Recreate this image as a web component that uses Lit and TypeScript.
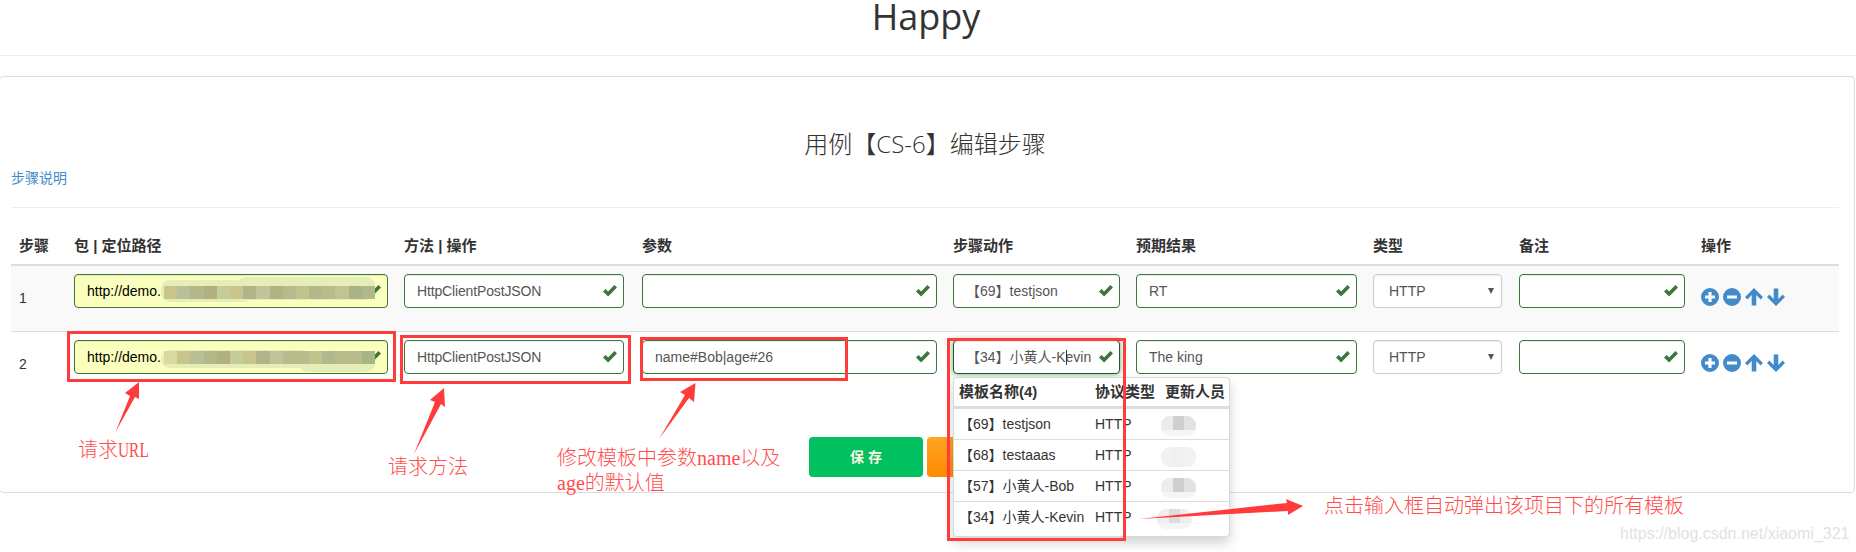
import { LitElement, html, css, svg } from "lit";
import { customElement } from "lit/decorators.js";

const URL_COLORS = ["#c8c48c","#b8c098","#b4b888","#b0b080","#c4cc98","#c8c48c","#b0b488","#c0c498","#b0b484","#b4bc8c","#c0c48c","#b0b88c","#b8bc8c","#c0c494","#a8b484","#b0b88c"];
const URL_COLORS_2 = ["#d8d8a0","#c8c48c","#b8c098","#b4b888","#b0b080","#c4cc98","#c8c48c","#b0b488","#c0c498","#b8bc8c","#b8bc8c","#c0c48c","#b0b88c","#b8bc8c","#b8bc8c","#a8b484"];

const NAME_BLOBS = [
  { cls: "b1", cells: ["#ecebec", "#d0cfcf", "#e3e2e2"] },
  { cls: "b2", cells: ["#f2f2f2", "#f0f0f0", "#f2f2f2"] },
  { cls: "b3", cells: ["#eeeded", "#d0cfcf", "#e3e2e2"] },
  { cls: "b4", cells: ["#f0eeef", "#dddcdc", "#eeeeee"] },
];

const TEMPLATES = ["【69】testjson", "【68】testaaas", "【57】小黄人-Bob", "【34】小黄人-Kevin"];

const check = html`<svg class="check" viewBox="0 0 14 12" width="14" height="12"><path d="M0 6.6 2.6 4 5.1 6.5 11.4 0 14 2.6 5.1 11.6Z"/></svg>`;

const plus = html`<svg class="op" viewBox="0 0 18 18"><path fill-rule="evenodd" d="M9 0a9 9 0 1 0 0 18A9 9 0 0 0 9 0ZM7.4 4h3.2v3.4H14v3.2h-3.4V14H7.4v-3.4H4V7.4h3.4Z"/></svg>`;
const minus = html`<svg class="op" viewBox="0 0 18 18"><path fill-rule="evenodd" d="M9 0a9 9 0 1 0 0 18A9 9 0 0 0 9 0ZM4 7.4h10v3.2H4Z"/></svg>`;
const up = html`<svg class="op" viewBox="0 0 18 18"><path d="M9 0 18 9 15.6 11.4 11.3 7.1V17.5H6.7V7.1L2.4 11.4 0 9Z"/></svg>`;
const down = html`<svg class="op" viewBox="0 0 18 18"><path d="M9 18 0 9 2.4 6.6 6.7 10.9V.5H11.3V10.9L15.6 6.6 18 9Z"/></svg>`;

@customElement("app-root")
export class AppRoot extends LitElement {
  static styles = css`
    :host {
      display: block;
      position: relative;
      width: 1856px;
      height: 552px;
      overflow: hidden;
      background: #fff;
      color: #333;
      font: 14px/20px "Liberation Sans", "Noto Sans CJK SC", sans-serif;
    }
    .top {
      box-sizing: border-box;
      height: 56px;
      padding-right: 4px;
      border-bottom: 1px solid #eee;
      text-align: center;
      font: 400 36px/34px "Open Sans", "Noto Sans CJK SC", sans-serif;
      color: #333;
      margin: 0;
    }
    .card {
      box-sizing: border-box;
      margin: 20px 1px 0 -1px;
      height: 417px;
      padding: 49px 15px 0 11px;
      border: 1px solid #ddd;
      border-radius: 4px;
    }
    .title {
      margin: 0;
      text-align: center;
      font: 300 24px/36px "Open Sans", "Noto Sans CJK SC", sans-serif;
      color: #333;
    }
    .link {
      display: block;
      margin-top: 6px;
      color: #428bca;
    }
    .rule {
      margin: 19px 0 20px;
      height: 1px;
      background: #eee;
    }
    table {
      width: 1828px;
      table-layout: fixed;
      border-collapse: separate;
      border-spacing: 0;
    }
    .c1 { width: 55px; }
    .c2 { width: 330px; }
    .c3 { width: 238px; }
    .c4 { width: 311px; }
    .c5 { width: 183px; }
    .c6 { width: 237px; }
    .c7 { width: 146px; }
    .c8 { width: 182px; }
    .c9 { width: 146px; }
    th {
      box-sizing: border-box;
      height: 38px;
      padding: 8px;
      text-align: left;
      font-size: 15px;
      font-weight: 700;
      line-height: 20px;
      border-bottom: 2px solid #ddd;
    }
    td {
      box-sizing: border-box;
      height: 66px;
      padding: 8px 8px 15px;
      vertical-align: top;
      border-bottom: 1px solid #ddd;
    }
    tr.odd td { background: #f9f9f9; }
    tr.last td { border-bottom: none; height: 65px; }
    td.num { padding-top: 22px; color: #333; }
    .wrap { position: relative; }
    .field {
      box-sizing: border-box;
      position: relative;
      display: flex;
      align-items: center;
      height: 34px;
      padding: 0 6px 0 12px;
      border: 1px solid #3c763d;
      border-radius: 4px;
      background: #fff;
      color: #555;
      box-shadow: inset 0 1px 1px rgba(0, 0, 0, 0.075);
    }
    .field.url { background: #faffbd; color: #000; }
    .field.method { margin-right: 2px; letter-spacing: -0.15px; }
    .field.focus { border-color: #2b542c; box-shadow: inset 0 1px 1px rgba(0, 0, 0, 0.075), 0 0 6px #67b168; }
    .text { flex: 1; min-width: 0; white-space: nowrap; overflow: hidden; }
    .check { flex: none; fill: #3c763d; }
    .select {
      box-sizing: border-box;
      display: flex;
      align-items: center;
      justify-content: space-between;
      height: 34px;
      margin-right: 1px;
      padding: 0 7px 0 15px;
      border: 1px solid #ccc;
      border-radius: 4px;
      background: #fff;
      color: #555;
      box-shadow: inset 0 1px 1px rgba(0, 0, 0, 0.075);
    }
    .caret {
      width: 0;
      height: 0;
      border-left: 3px solid transparent;
      border-right: 3px solid transparent;
      border-top: 6px solid #555;
    }
    .ops { display: flex; gap: 4px; margin-top: 14px; }
    .op { width: 18px; height: 18px; fill: #428bca; flex: none; }
    .blob {
      position: absolute;
      left: 87px;
      top: 0;
      width: 214px;
      height: 34px;
    }
    .patch { position: absolute; background: #e6eeb8; border-radius: 9px; }
    .r1 .p1 { left: 0; width: 92px; top: 6px; height: 22px; }
    .r1 .p2 { left: 76px; width: 138px; top: 3px; height: 23px; }
    .r2 .p1 { left: 0; width: 150px; top: 10px; height: 18px; }
    .r2 .p2 { left: 138px; width: 76px; top: 12px; height: 20px; }
    .cells { position: absolute; left: 3px; right: 0; display: flex; height: 13px; }
    .r1 .cells { top: 12px; }
    .r2 .cells { top: 11px; }
    .cells span { flex: 1; }
    .actions {
      display: flex;
      justify-content: center;
      gap: 4px;
      margin-top: 40px;
    }
    .btn {
      box-sizing: border-box;
      width: 114px;
      height: 40px;
      border-radius: 4px;
      text-align: center;
      line-height: 40px;
      font-weight: 700;
      color: #fdf6e3;
      white-space: pre;
    }
    .btn.save { background: #00c060; }
    .btn.reset { background: linear-gradient(#ffa424, #ff8c00); }
    .menu {
      box-sizing: border-box;
      position: absolute;
      z-index: 5;
      top: 37px;
      left: 0;
      width: 277px;
      height: 160px;
      padding-bottom: 4px;
      background: #fff;
      border: 1px solid rgba(0, 0, 0, 0.15);
      border-radius: 4px;
      box-shadow: 0 6px 12px rgba(0, 0, 0, 0.175);
    }
    .mrow {
      position: relative;
      box-sizing: border-box;
      display: grid;
      grid-template-columns: 136px 70px 1fr;
      align-items: center;
      height: 31px;
      padding-left: 5px;
      color: #333;
      border-top: 1px solid #ddd;
    }
    .mhead {
      height: 30px;
      border-top: none;
      border-bottom: 2px solid #ddd;
      font-size: 15px;
      font-weight: 700;
      white-space: nowrap;
    }
    .mask {
      position: absolute;
      display: flex;
      width: 35px;
      height: 20px;
      border-radius: 9px;
      overflow: hidden;
      background: #f5f5f5;
      left: 207px;
      top: 7px;
    }
    .mask span { flex: 1; height: 14px; }
    .mask.b2 span { height: 20px; }
    .mask.b4 { left: 203px; }
    .overlay {
      position: absolute;
      z-index: 10;
      inset: 0;
      width: 1856px;
      height: 552px;
      pointer-events: none;
    }
    .note {
      position: absolute;
      z-index: 11;
      color: #ff4d4d;
      font: 300 20px/26px "Liberation Serif", "Noto Sans CJK SC", serif;
      white-space: nowrap;
    }
    .narrow { display: inline-block; width: 30px; transform: scaleX(0.77); transform-origin: left center; }
    .n-url { left: 78px; top: 437px; }
    .n-method { left: 388px; top: 454px; }
    .n-params { left: 557px; top: 446px; line-height: 25px; }
    .n-menu { left: 1324px; top: 493px; }
    .mark {
      position: absolute;
      z-index: 11;
      left: 1620px;
      top: 523px;
      color: #e2e2e2;
      font: 16px/22px "Liberation Sans", sans-serif;
      white-space: nowrap;
    }
  `;

  private blob(row: string, colors: string[]) {
    return html`<div class="blob ${row}">
      <div class="patch p1"></div>
      <div class="patch p2"></div>
      <div class="cells">${colors.map((c) => html`<span style="background:${c}"></span>`)}</div>
    </div>`;
  }

  private field(text: string, extra = "") {
    return html`<div class="field ${extra}"><span class="text">${text}</span>${check}</div>`;
  }

  private row(n: number, cls: string, blob: unknown, param: string, action: string, expect: string, focus: boolean, menu: unknown) {
    return html`<tr class=${cls}>
      <td class="num">${n}</td>
      <td><div class="wrap">${this.field("http://demo.", "url")}${blob}</div></td>
      <td>${this.field("HttpClientPostJSON", "method")}</td>
      <td>${this.field(param)}</td>
      <td><div class="wrap">${this.field(action, focus ? "focus" : "")}${menu}</div></td>
      <td>${this.field(expect)}</td>
      <td><div class="select"><span>HTTP</span><i class="caret"></i></div></td>
      <td>${this.field("")}</td>
      <td><div class="ops">${plus}${minus}${up}${down}</div></td>
    </tr>`;
  }

  private menu() {
    return html`<div class="menu">
      <div class="mrow mhead"><span>模板名称(4)</span><span>协议类型</span><span>更新人员</span></div>
      ${TEMPLATES.map(
        (t, i) => html`<div class="mrow"><span>${t}</span><span>HTTP</span><span></span>
          <div class="mask ${NAME_BLOBS[i].cls}">${NAME_BLOBS[i].cells.map((c) => html`<span style="background:${c}"></span>`)}</div>
        </div>`
      )}
    </div>`;
  }

  render() {
    return html`
      <h1 class="top">Happy</h1>
      <section class="card">
        <h3 class="title">用例【CS-6】编辑步骤</h3>
        <a class="link">步骤说明</a>
        <div class="rule"></div>
        <table>
          <colgroup>
            <col class="c1" /><col class="c2" /><col class="c3" /><col class="c4" /><col class="c5" /><col class="c6" /><col class="c7" /><col class="c8" /><col class="c9" />
          </colgroup>
          <thead>
            <tr><th>步骤</th><th>包 | 定位路径</th><th>方法 | 操作</th><th>参数</th><th>步骤动作</th><th>预期结果</th><th>类型</th><th>备注</th><th>操作</th></tr>
          </thead>
          <tbody>
            ${this.row(1, "odd", this.blob("r1", URL_COLORS), "", "【69】testjson", "RT", false, null)}
            ${this.row(2, "last", this.blob("r2", URL_COLORS_2), "name#Bob|age#26", "【34】小黄人-Kevin", "The king", true, this.menu())}
          </tbody>
        </table>
        <div class="actions">
          <div class="btn save">保 存</div>
          <div class="btn reset"></div>
        </div>
      </section>
      <svg class="overlay" viewBox="0 0 1856 552">
        ${svg`<g fill="none" stroke="#ff3b3b" stroke-width="3">
          <rect x="68.5" y="332.5" width="326" height="48"/>
          <rect x="401.5" y="336.5" width="228" height="46"/>
          <rect x="641.5" y="338.5" width="205" height="41"/>
          <rect x="948.5" y="339.5" width="176" height="200"/>
        </g>
        <g fill="#ff3b3b">
          <polygon points="115.5,432 130,396 125,393 139,382 139,399 135,397"/>
          <polygon points="414,454 435,402 430,400 444,388 445,407 441,404"/>
          <polygon points="659,439 685,395 680,392 695.5,383 694,402 689,398"/>
          <polygon points="1139,519 1287,503 1286,499 1303,506 1288,515 1288,511"/>
        </g>
        <line x1="1066.5" y1="350" x2="1066.5" y2="365" stroke="#333" stroke-width="1"/>`}
      </svg>
      <div class="note n-url">请求<span class="narrow">URL</span></div>
      <div class="note n-method">请求方法</div>
      <div class="note n-params">修改模板中参数name以及<br />age的默认值</div>
      <div class="note n-menu">点击输入框自动弹出该项目下的所有模板</div>
      <div class="mark">https://blog.csdn.net/xiaomi_321</div>
    `;
  }
}
